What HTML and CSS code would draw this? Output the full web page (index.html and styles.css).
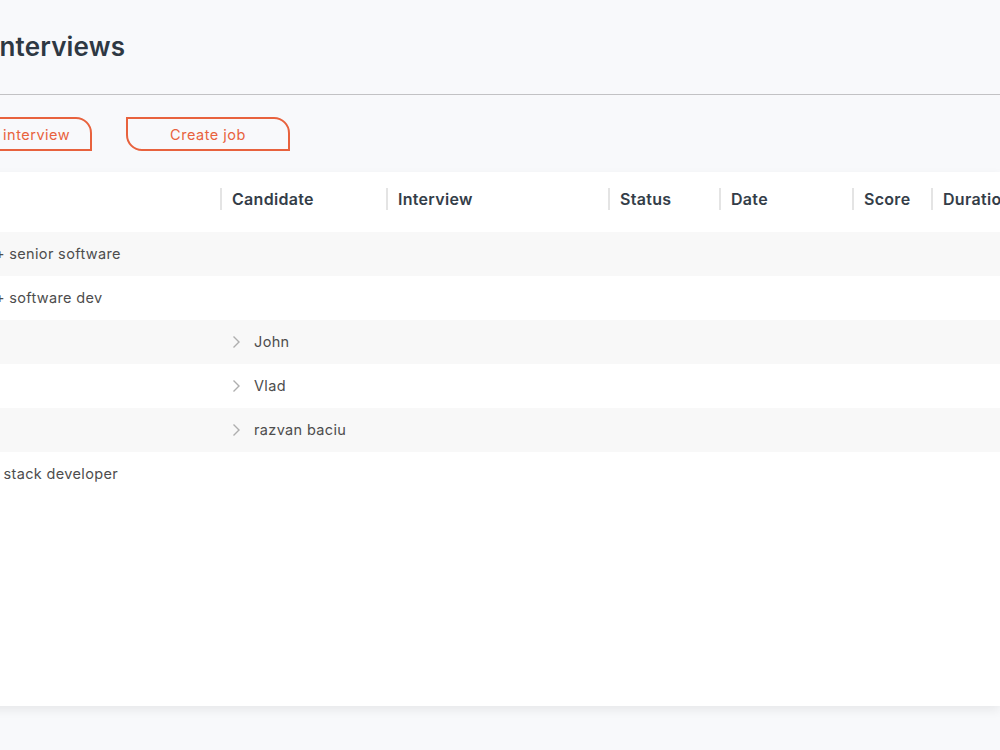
FILE: index.html
```html
<!DOCTYPE html>
<html lang="en">
<head>
    <meta charset="UTF-8">
    <meta name="viewport" content="width=device-width, initial-scale=1.0">
    <title>Interviews</title>
    <link rel="stylesheet" href="styles.css">
</head>
<body>

<div class="page">
    <header class="page-head">
        <h1>Interviews</h1>
    </header>

    <div class="actions">
        <button type="button" class="btn-leaf">Create interview</button>
        <button type="button" class="btn-leaf">Create job</button>
    </div>

    <div class="panel">
        <div class="grid head">
            <div class="th th-job">Job</div>
            <div class="th">Candidate</div>
            <div class="th">Interview</div>
            <div class="th">Status</div>
            <div class="th">Date</div>
            <div class="th">Score</div>
            <div class="th">Duration</div>
        </div>

        <div class="grid row job">
            <div class="td td-job">C++ senior software</div>
            <div class="td"></div><div class="td"></div><div class="td"></div>
            <div class="td"></div><div class="td"></div><div class="td"></div>
        </div>
        <div class="grid row job">
            <div class="td td-job">C++ software dev</div>
            <div class="td"></div><div class="td"></div><div class="td"></div>
            <div class="td"></div><div class="td"></div><div class="td"></div>
        </div>
        <div class="grid row">
            <div class="td td-job"></div>
            <div class="td cand"><svg class="chev" width="9" height="14" viewBox="0 0 9 14"><polyline points="1.5,1.5 7,7 1.5,12.5"/></svg>John</div>
            <div class="td"></div><div class="td"></div><div class="td"></div><div class="td"></div><div class="td"></div>
        </div>
        <div class="grid row">
            <div class="td td-job"></div>
            <div class="td cand"><svg class="chev" width="9" height="14" viewBox="0 0 9 14"><polyline points="1.5,1.5 7,7 1.5,12.5"/></svg>Vlad</div>
            <div class="td"></div><div class="td"></div><div class="td"></div><div class="td"></div><div class="td"></div>
        </div>
        <div class="grid row">
            <div class="td td-job"></div>
            <div class="td cand"><svg class="chev" width="9" height="14" viewBox="0 0 9 14"><polyline points="1.5,1.5 7,7 1.5,12.5"/></svg>razvan baciu</div>
            <div class="td"></div><div class="td"></div><div class="td"></div><div class="td"></div><div class="td"></div>
        </div>
        <div class="grid row job">
            <div class="td td-job">Full stack developer</div>
            <div class="td"></div><div class="td"></div><div class="td"></div>
            <div class="td"></div><div class="td"></div><div class="td"></div>
        </div>
    </div>
</div>

</body>
</html>
```

FILE: styles.css
```css
* { margin: 0; padding: 0; box-sizing: border-box; }
html, body { height: 100%; }
body {
    font-family: 'Inter', 'Open Sans', sans-serif;
    background: #f8f9fb; color: #333; overflow: hidden;
}
.page { margin-left: -72px; width: 1200px; }

.page-head { padding: 31px 0 31px 64px; border-bottom: 1px solid #c2c2c4; margin-right: 128px; }
h1 { font-size: 26px; line-height: 32px; font-weight: 600; color: #2e3843; letter-spacing: 0.2px; }

.actions { display: flex; gap: 34px; padding: 22px 0 21px 0; }
.btn-leaf {
    width: 164px; height: 34px; background: transparent;
    border: 2px solid #e8623d; border-radius: 0 16px 0 16px;
    color: #e8623d; font-family: inherit; font-size: 14.5px; letter-spacing: 0.5px; cursor: pointer;
}

.panel {
    background: #fff; width: 1072px; height: 534px;
    box-shadow: 0 4px 10px rgba(0, 0, 0, 0.07);
}
.grid {
    display: grid; align-items: center;
    grid-template-columns: 292px 166px 222px 111px 133px 79px 69px;
}
.head { height: 60px; padding-bottom: 6px; }
.th {
    border-left: 2px solid #e4e4e4; padding-left: 10px;
    font-size: 16px; line-height: 22px; font-weight: 600; color: #343d48; letter-spacing: 0.3px;
    white-space: nowrap; overflow: hidden;
}
.th-job { border-left: none; color: transparent; }

.row { height: 44px; padding-bottom: 1px; }
.row:nth-child(even) { background: #f8f8f8; }
.td { font-size: 14.5px; color: #4d4d4d; letter-spacing: 0.35px; white-space: nowrap; }
.td-job { padding-left: 46px; }
.cand { display: flex; align-items: center; gap: 13px; padding-left: 12px; }
.chev { fill: none; stroke: #aeaeae; stroke-width: 1.4; }
```
